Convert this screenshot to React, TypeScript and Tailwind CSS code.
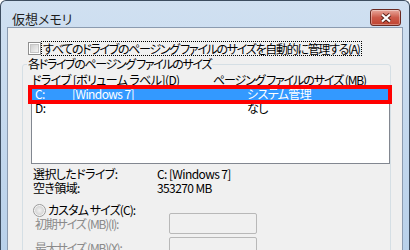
import React from "react";

const jp = "font-['Noto_Sans_CJK_JP',sans-serif] [font-feature-settings:'palt']";

function CloseButton() {
  return (
    <button
      type="button"
      aria-label="閉じる"
      className="mt-[8px] flex h-[17px] w-[31px] items-center justify-center rounded-[3px] border border-[#6b2a22] bg-linear-to-b from-[#e8a89d] via-[#cc5a4a] to-[#c0432f] shadow-[inset_0_0_0_1px_rgba(255,255,255,0.35)]"
    >
      <svg width="12" height="10" viewBox="0 0 12 10">
        <path d="M2 1.5 L10 8.5 M10 1.5 L2 8.5" stroke="#5a2018" strokeWidth="4" />
        <path d="M2 1.5 L10 8.5 M10 1.5 L2 8.5" stroke="#ffffff" strokeWidth="2.2" />
      </svg>
    </button>
  );
}

function Checkbox() {
  return (
    <span className="flex h-[13px] w-[13px] shrink-0 items-center justify-center border border-[#8f8f8f] bg-white">
      <span className="h-[9px] w-[9px] border border-[#c5c5c5] bg-linear-to-br from-[#cfcfcf] to-[#f4f4f4]" />
    </span>
  );
}

function Radio() {
  return (
    <span className="flex h-[13px] w-[13px] shrink-0 items-center justify-center rounded-full border border-[#9a9a9a] bg-[#f4f4f4]">
      <span className="h-[9px] w-[9px] rounded-full bg-radial from-[#f2f2f2] to-[#c8c8c8]" />
    </span>
  );
}

const drives = [
  { drive: "C:", label: "[Windows 7]", size: "システム管理", selected: true },
  { drive: "D:", label: "", size: "なし", selected: false },
];

export default function App() {
  return (
    <div className="h-[250px] w-[410px] overflow-hidden bg-white">
      <div
        className={`flex h-[250px] w-[410px] flex-col rounded-t-[6px] border border-b-0 border-[#3d4d60] bg-linear-to-b from-[#d0e0f1] to-[#b9d1ea] px-[6px] whitespace-nowrap ${jp}`}
      >
        {/* title bar */}
        <div className="flex h-[28px] items-start justify-between pl-[5px] pr-[2px]">
          <span className="mt-[10px] text-[13px] leading-[16px] text-[#1e1e1e]">仮想メモリ</span>
          <CloseButton />
        </div>

        {/* client area */}
        <div className="flex-1 border border-b-0 border-[#8b9bb0] bg-[#f0f0f0] pt-[13px] text-[12px] leading-[14px] tracking-[-0.6px] text-black">
          <div className="flex items-center pl-[20px]">
            <Checkbox />
            <span className="flex h-[15px] items-center border border-dotted border-black px-[1px] tracking-[-1.3px]">
              すべてのドライブのページング ファイルのサイズを自動的に管理する(A)
            </span>
          </div>

          <fieldset className="mt-[2px] ml-[14px] w-[366px] rounded-[3px] border border-[#d5dfe5] pb-[40px]">
            <legend className="ml-[4px] px-[1px] leading-[12px] tracking-[-1.35px]">
              各ドライブのページング ファイルのサイズ
            </legend>

            <div className="flex pt-[4px] pl-[9px] leading-[12px]">
              <span className="w-[181px]">ドライブ [ボリューム ラベル](D)</span>
              <span className="tracking-[-1.1px]">ページング ファイルのサイズ (MB)</span>
            </div>

            <div className="relative ml-[8px] h-[78px] w-[359px] border border-[#828790] bg-white">
              {drives.map((d) => (
                <div
                  key={d.drive}
                  className={`flex h-[14px] items-center pl-[3px] ${d.selected ? "bg-[#3399ff] text-white" : ""}`}
                >
                  <span className="w-[37px]">{d.drive}</span>
                  <span className="w-[175px]">{d.label}</span>
                  <span>{d.size}</span>
                </div>
              ))}
              {/* red annotation frame */}
              <div className="absolute top-[-2px] left-[-4px] h-[19px] w-[364px] border-4 border-[#ff0000]" />
            </div>

            <div className="mt-[3px] pl-[10px]">
              <div className="flex">
                <span className="w-[124px]">選択したドライブ:</span>
                <span>C: [Windows 7]</span>
              </div>
              <div className="flex">
                <span className="w-[124px]">空き領域:</span>
                <span>353270 MB</span>
              </div>
            </div>

            <div className="mt-[8px] flex items-center gap-[2px] pl-[10px]">
              <Radio />
              <span className="tracking-[-0.9px]">カスタム サイズ(C):</span>
            </div>

            <div className="mt-[-4px] flex flex-col gap-[3px] pl-[12px] tracking-[-1.2px] text-[#8a8a8a]">
              <div className="flex items-center">
                <span className="w-[134px]">初期サイズ (MB)(I):</span>
                <span className="h-[21px] w-[88px] rounded-[2px] border border-[#b8b8b8] bg-[#f0f0f0]" />
              </div>
              <div className="flex items-center">
                <span className="w-[134px]">最大サイズ (MB)(X):</span>
                <span className="h-[21px] w-[88px] rounded-[2px] border border-[#b8b8b8] bg-[#f0f0f0]" />
              </div>
            </div>
          </fieldset>
        </div>
      </div>
    </div>
  );
}
